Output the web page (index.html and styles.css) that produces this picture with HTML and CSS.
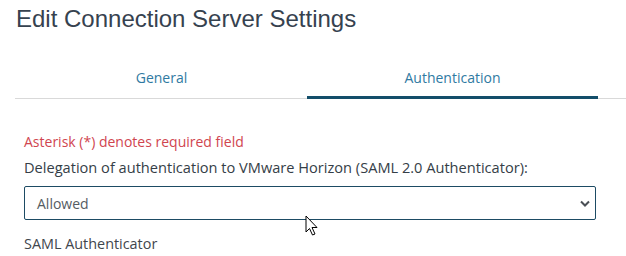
FILE: index.html
```html
<!DOCTYPE html>
<html lang="en">
<head>
    <meta charset="UTF-8">
    <title>Edit Connection Server Settings</title>
    <link rel="stylesheet" href="styles.css">
</head>
<body>
    <div class="dialog">
        <h1>Edit Connection Server Settings</h1>

        <div class="tabs">
            <div class="tab">General</div>
            <div class="tab active">Authentication</div>
        </div>

        <div class="form">
            <p class="required-note">Asterisk (*) denotes required field</p>
            <label class="field-label">Delegation of authentication to VMware Horizon (SAML 2.0 Authenticator):</label>
            <div class="select">
                <span>Allowed</span>
                <svg class="chevron" width="10" height="7" viewBox="0 0 10 7">
                    <path d="M1 1.5 L5 5.5 L9 1.5" fill="none" stroke="#4a4f55" stroke-width="2"/>
                </svg>
                <svg class="cursor" width="14" height="22" viewBox="0 0 14 22">
                    <path d="M1 1 L1 17 L4.5 13.5 L7.5 20 L10 19 L7 12.5 L12 12.5 Z" fill="#fff" stroke="#000" stroke-width="1" stroke-linejoin="round"/>
                </svg>
            </div>
            <div class="section-label">SAML Authenticator</div>
        </div>
    </div>
</body>
</html>
```

FILE: styles.css
```css
body {
    margin: 0;
    background: #fff;
    font-family: 'Open Sans', sans-serif;
    overflow: hidden;
}
.dialog {
    padding: 6px 0 0 16px;
}
h1 {
    font-family: 'Liberation Sans', Arial, sans-serif;
    font-weight: normal;
    font-size: 24px;
    color: #36424f;
    margin: 0;
    line-height: 26px;
}
.tabs {
    display: flex;
    margin-top: 32px;
    margin-left: -1px;
    border-bottom: 1px solid #d9d9d9;
}
.tab {
    width: 291px;
    text-align: center;
    font-size: 14px;
    color: #2f7aa2;
    padding: 4px 0 9px;
    border-bottom: 3px solid transparent;
    margin-bottom: -1px;
}
.tab:first-child {
    margin-left: 1px;
}
.tab.active {
    border-bottom-color: #134e6a;
}
.form {
    padding: 33px 30px 0 8px;
}
.required-note {
    margin: 0;
    font-size: 14px;
    color: #d0454f;
    line-height: 19px;
}
.field-label {
    display: block;
    margin-top: 7px;
    font-size: 14.6px;
    color: #353e47;
    line-height: 19px;
}
.select {
    position: relative;
    display: flex;
    align-items: center;
    justify-content: space-between;
    margin-top: 9px;
    height: 32px;
    border: 1px solid #1d4b64;
    border-radius: 2px;
    padding: 0 5px 0 12px;
    font-size: 14px;
    color: #555c63;
}
.cursor {
    position: absolute;
    left: 280px;
    top: 28px;
}
.section-label {
    margin-top: 14px;
    font-size: 14.4px;
    color: #3f464d;
}
```
